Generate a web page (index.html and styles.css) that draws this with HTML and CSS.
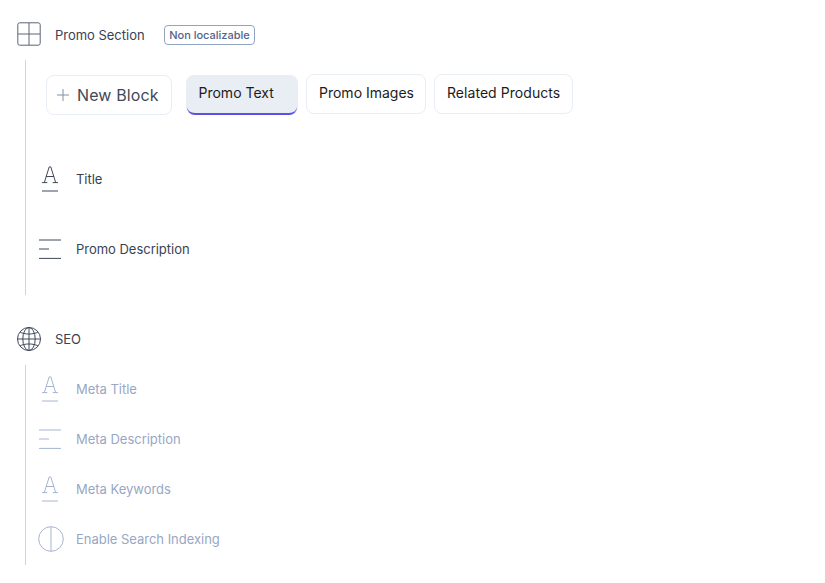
FILE: index.html
```html
<!DOCTYPE html>
<html lang="en">
<head>
<meta charset="utf-8">
<title>Content fields</title>
<link rel="stylesheet" href="styles.css">
</head>
<body>
<svg width="0" height="0" class="defs">
  <symbol id="letter" viewBox="0 0 26 28">
    <path d="M6.3 16.6 11.2 .9h1.6l4.9 15.7M8 10.5h8M4 16.6h5.3M14.7 16.6H20"/>
    <path d="M4 25h16"/>
  </symbol>
  <symbol id="lines" viewBox="0 0 26 28">
    <path d="M1 4h22M1 13h10M1 22.4h22"/>
  </symbol>
</svg>
<main class="page">
  <section>
    <header class="head">
      <svg class="head-icon grid" viewBox="0 0 24 24"><rect x=".8" y=".8" width="22.4" height="22.4" rx="2"/><path d="M12 1v22M1 12h22"/></svg>
      <span class="label head-promo">Promo Section</span>
      <span class="badge">Non localizable</span>
    </header>
    <div class="group modular">
      <nav class="tabs">
        <button class="new"><svg viewBox="0 0 12 12"><path d="M6 0v12M0 6h12"/></svg><span>New Block</span></button>
        <button class="tab active">Promo Text</button>
        <button class="tab images">Promo Images</button>
        <button class="tab related">Related Products</button>
      </nav>
      <div class="row"><svg class="icon"><use href="#letter"/></svg><span class="label">Title</span></div>
      <div class="row"><svg class="icon"><use href="#lines"/></svg><span class="label">Promo Description</span></div>
    </div>
  </section>
  <section class="seo">
    <header class="head">
      <svg class="head-icon" viewBox="0 0 24 24"><circle cx="12" cy="12" r="11.5"/><ellipse cx="12" cy="12" rx="6.2" ry="11.5"/><path d="M12 .5v23M.5 12h23M3 5c4 2.7 14 2.7 18 0M3 19c4-2.7 14-2.7 18 0"/></svg>
      <span class="label">SEO</span>
    </header>
    <div class="group muted">
      <div class="row"><svg class="icon"><use href="#letter"/></svg><span class="label">Meta Title</span></div>
      <div class="row"><svg class="icon"><use href="#lines"/></svg><span class="label">Meta Description</span></div>
      <div class="row"><svg class="icon"><use href="#letter"/></svg><span class="label">Meta Keywords</span></div>
      <div class="row"><svg class="icon" viewBox="0 0 26 28"><circle cx="13" cy="13" r="12.3"/><path d="M13 .7v24.6"/></svg><span class="label">Enable Search Indexing</span></div>
    </div>
  </section>
</main>
</body>
</html>
```
FILE: styles.css
```css
* { box-sizing: border-box; }
body {
  margin: 0;
  background: #fff;
  color: #3a4252;
  font: 13px/20px Inter, "Liberation Sans", sans-serif;
}
.defs { display: block; height: 0; }
.page { padding: 10px 17px 0; }
.head { display: flex; align-items: center; height: 50px; }
.head-icon {
  width: 24px;
  height: 24px;
  margin: -2px 14px 0 0;
  fill: none;
  stroke: #404858;
  stroke-width: 1;
}
.grid { stroke: #5c6474; }
.label { letter-spacing: -.02px; padding-bottom: 2px; white-space: nowrap; }
.head-promo { width: 109px; padding-bottom: 0; }
.badge {
  height: 20px;
  width: 91px;
  border: 1px solid #92a4c4;
  border-radius: 4px;
  color: #52638a;
  font-size: 11px;
  font-weight: 500;
  line-height: 18px;
  text-align: center;
  white-space: nowrap;
}
.group { margin-left: 8px; border-left: 1px solid #d0d4e2; padding-left: 12px; }
.modular { height: 235px; }
.tabs { display: flex; align-items: flex-start; height: 85px; padding: 15px 0 0 8px; }
button { margin: 0; background: #fff; font-family: inherit; }
.new {
  display: flex;
  align-items: center;
  width: 126px;
  height: 40px;
  margin-right: 14px;
  padding: 0 0 0 10px;
  border: 1px solid #e9edf5;
  border-radius: 8px;
  color: #414958;
  font-size: 16px;
  line-height: 24px;
  letter-spacing: .12px;
  white-space: nowrap;
}
.new svg { width: 12px; height: 12px; margin-right: 8px; fill: none; stroke: #8490a2; }
.tab {
  height: 40px;
  margin: -1px 8px 0 0;
  padding: 0 0 2px 12px;
  border: 1px solid #e9edf5;
  border-radius: 8px;
  color: #1c1c1c;
  font-size: 14px;
  line-height: 20px;
  letter-spacing: 0;
  text-align: left;
  white-space: nowrap;
}
.active {
  position: relative;
  width: 112px;
  margin-top: 0;
  padding: 0 0 4px 12.5px;
  border: 0;
  background: #e9edf4;
}
.active::after {
  content: "";
  position: absolute;
  inset: auto 1px 0 1px;
  height: 8px;
  border-bottom: 2px solid #5d50e6;
  border-radius: 0 0 8px 8px;
}
.images { width: 120px; }
.related { width: 139px; letter-spacing: .05px; }
.row { display: flex; align-items: center; height: 50px; }
.modular .row { height: 70px; }
.icon {
  width: 26px;
  height: 28px;
  margin-right: 12px;
  fill: none;
  stroke: #414958;
  stroke-width: 1;
}
.seo { margin-top: 20px; }
.muted .label { color: #98a7c4; }
.muted .icon { stroke: #a6b4d0; }
```
